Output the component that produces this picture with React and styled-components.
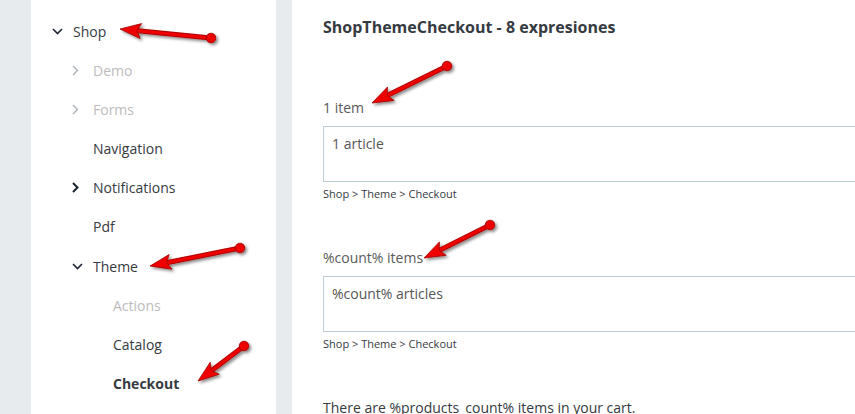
import React from "react";
import styled, { createGlobalStyle } from "styled-components";

const Global = createGlobalStyle`
  html, body { margin: 0; padding: 0; }
  body { font-family: "Open Sans", "Noto Sans", sans-serif; background: #e8ebed; }
`;

const Page = styled.div`
  position: relative;
  display: flex;
  height: 414px;
  width: 855px;
  overflow: hidden;
  background: #e8ebed;
  padding-left: 31px;
  box-sizing: border-box;
`;

const Sidebar = styled.nav`
  width: 245px;
  flex: none;
  background: #fff;
  padding-top: 12px;
  margin-right: 16px;
  box-sizing: border-box;
`;

const Row = styled.div`
  height: 39px;
  display: flex;
  align-items: center;
  margin-top: ${(p) => (p.$spaced ? 1 : 0)}px;
  padding-left: ${(p) => 21 + (p.$level - 1) * 20}px;
  font-size: 14px;
  color: ${(p) => (p.$disabled ? "#bcbcbc" : "#363a41")};
  font-weight: ${(p) => (p.$active ? 700 : 400)};
`;

const Caret = styled.span`
  width: 21px;
  flex: none;
  display: flex;
  align-items: center;
  color: ${(p) => (p.$muted ? "#a9b1b4" : "#1c2430")};
`;

const Main = styled.main`
  flex: 1;
  background: #fff;
  padding: 16px 0 0 31px;
  box-sizing: border-box;
  min-width: 0;
`;

const Title = styled.h2`
  margin: 0;
  font-size: 16px;
  font-weight: 700;
  color: #363a41;
  line-height: 22px;
`;

const Group = styled.div`
  margin-top: ${(p) => p.$top}px;
`;

const Label = styled.div`
  font-size: 14px;
  color: #5a5a5a;
  line-height: 20px;
  margin-bottom: 8px;
`;

const Box = styled.div`
  height: 56px;
  border: 1px solid #bbcdd2;
  border-right: none;
  box-sizing: border-box;
  padding: 7px 8px;
  font-size: 14px;
  color: #555;
  line-height: 20px;
`;

const Hint = styled.div`
  font-size: 11px;
  color: #363a41;
  margin-top: 5px;
  line-height: 14px;
`;

const Text = styled.div`
  font-size: 14px;
  color: #363a41;
  line-height: 20px;
`;

const Overlay = styled.svg`
  position: absolute;
  left: 0;
  top: 0;
  pointer-events: none;
`;

const Down = () => (
  <svg width="11" height="7" viewBox="0 0 11 7">
    <polyline points="1,1 5.5,5.5 10,1" fill="none" stroke="currentColor" strokeWidth="1.6" />
  </svg>
);
const Right = ({ bold }) => (
  <svg width="7" height="11" viewBox="0 0 7 11">
    <polyline points="1,1 5.5,5.5 1,10" fill="none" stroke="currentColor" strokeWidth={bold ? 2 : 1.4} />
  </svg>
);

const items = [
  { label: "Shop", level: 1, caret: "down" },
  { label: "Demo", level: 2, caret: "right", disabled: true },
  { label: "Forms", level: 2, caret: "right", disabled: true },
  { label: "Navigation", level: 2 },
  { label: "Notifications", level: 2, caret: "right", bold: true },
  { label: "Pdf", level: 2 },
  { label: "Theme", level: 2, caret: "down", spaced: true },
  { label: "Actions", level: 3, disabled: true },
  { label: "Catalog", level: 3 },
  { label: "Checkout", level: 3, active: true },
];

const arrows = [
  { from: [211, 38], to: [120, 29] },
  { from: [447, 66], to: [372, 103] },
  { from: [240, 248], to: [150, 266] },
  { from: [490, 225], to: [424, 258] },
  { from: [244, 346], to: [198, 381] },
];

function Arrow({ from, to }) {
  const [x1, y1] = from;
  const [x2, y2] = to;
  const dx = x2 - x1;
  const dy = y2 - y1;
  const len = Math.hypot(dx, dy);
  const ux = dx / len;
  const uy = dy / len;
  const px = -uy;
  const py = ux;
  const hl = 21;
  const hw = 7.5;
  const bx = x2 - ux * hl;
  const by = y2 - uy * hl;
  const head = `${x2},${y2} ${bx + px * hw},${by + py * hw} ${bx + ux * 4},${by + uy * 4} ${bx - px * hw},${by - py * hw}`;
  return (
    <g>
      <line x1={x1} y1={y1} x2={bx + ux * 3} y2={by + uy * 3} stroke="#b00000" strokeWidth="5" strokeLinecap="round" />
      <line x1={x1} y1={y1} x2={bx + ux * 3} y2={by + uy * 3} stroke="#ee0000" strokeWidth="3" strokeLinecap="round" />
      <polygon points={head} fill="#ee0000" stroke="#a00000" strokeWidth="0.8" strokeLinejoin="round" />
      <circle cx={x1} cy={y1} r="4.8" fill="#ee0000" stroke="#a00000" strokeWidth="0.8" />
    </g>
  );
}

export default function App() {
  return (
    <>
      <Global />
      <Page>
        <Sidebar>
          {items.map((it) => (
            <Row
              key={it.label}
              $level={it.level}
              $disabled={it.disabled}
              $active={it.active}
              $spaced={it.spaced}
            >
              <Caret $muted={it.disabled}>
                {it.caret === "down" && <Down />}
                {it.caret === "right" && <Right bold={it.bold} />}
              </Caret>
              {it.label}
            </Row>
          ))}
        </Sidebar>
        <Main>
          <Title>ShopThemeCheckout - 8 expresiones</Title>
          <Group $top={60}>
            <Label>1 item</Label>
            <Box>1 article</Box>
            <Hint>Shop &gt; Theme &gt; Checkout</Hint>
          </Group>
          <Group $top={47}>
            <Label>%count% items</Label>
            <Box>%count% articles</Box>
            <Hint>Shop &gt; Theme &gt; Checkout</Hint>
          </Group>
          <Group $top={47}>
            <Text>There are %products_count% items in your cart.</Text>
          </Group>
        </Main>
        <Overlay width="855" height="414" viewBox="0 0 855 414">
          <defs>
            <filter id="sh" x="-20%" y="-20%" width="140%" height="140%">
              <feDropShadow dx="2" dy="2" stdDeviation="1.5" floodColor="#000" floodOpacity="0.45" />
            </filter>
          </defs>
          <g filter="url(#sh)">
            {arrows.map((a, i) => (
              <Arrow key={i} {...a} />
            ))}
          </g>
        </Overlay>
      </Page>
    </>
  );
}
